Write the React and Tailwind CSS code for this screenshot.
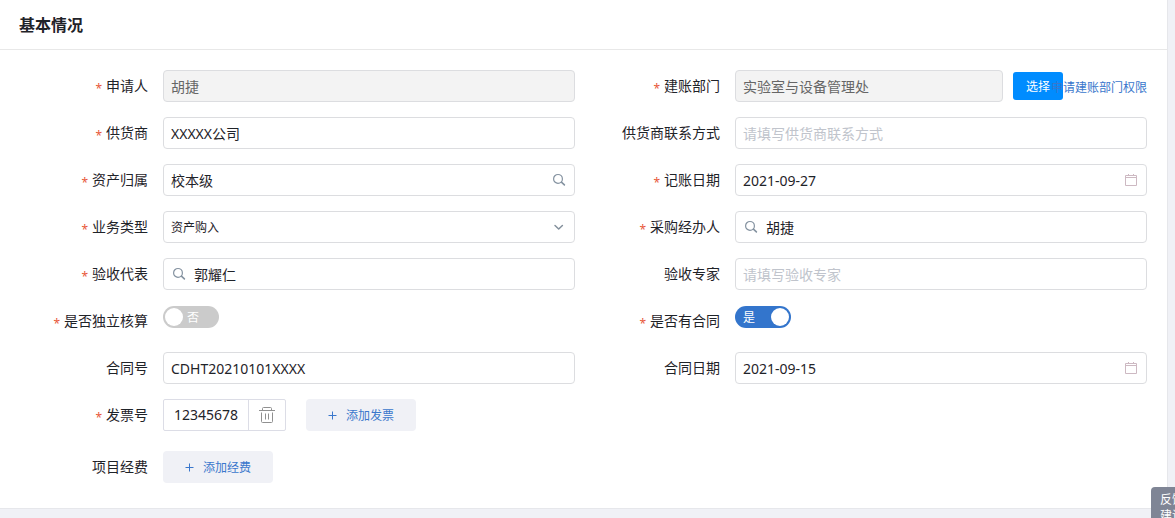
import React, { useState } from 'react';

/* ── Icons ─────────────────────────────────────────────────── */
const SearchIcon = ({ className = '' }) => (
  <svg className={`w-[14px] h-[14px] ${className}`} viewBox="0 0 14 14" fill="none" stroke="#8492a0" strokeWidth={1.2} strokeLinecap="round">
    <circle cx="6" cy="5.9" r="4.4" />
    <path d="M9.4 9.2l3 2.7" strokeWidth={1.6} />
  </svg>
);
const ChevronIcon = ({ className = '' }) => (
  <svg className={`w-[14px] h-[14px] ${className}`} viewBox="0 0 14 14" fill="none" stroke="#84909c" strokeWidth={1.5} strokeLinecap="round" strokeLinejoin="round">
    <path d="M3 5.5l3.7 3.5 3.7-3.5" />
  </svg>
);
const CalendarIcon = ({ className = '' }) => (
  <svg className={`w-[14px] h-[14px] ${className}`} viewBox="0 0 14 14" fill="none" stroke="#cdb9c2" strokeWidth={1}>
    <path d="M1.5 2.5h11v10h-11zM1.5 4.5h11M4.5 1v2M9.5 1v2" />
  </svg>
);
const TrashIcon = ({ className = '' }) => (
  <svg className={`w-4 h-4 ${className}`} viewBox="0 0 16 16" fill="none" stroke="#909090" strokeWidth={1}>
    <path d="M0 3.5h16M3.5 3.5v-2a1 1 0 0 1 1-1h7a1 1 0 0 1 1 1v2" />
    <path d="M2.5 5.5v9a1 1 0 0 0 1 1h9a1 1 0 0 0 1-1v-9M6.5 6.5v6M9.5 6.5v6" />
  </svg>
);
const PlusIcon = ({ className = '' }) => (
  <svg className={`w-[9px] h-[9px] ${className}`} viewBox="0 0 9 9" fill="none" stroke="#3a77cc" strokeWidth={1}>
    <path d="M4.5 0.5v8M0.5 4.5h8" />
  </svg>
);

const inputClass =
  'block w-full h-8 rounded border border-[#dcdde0] bg-white px-[7px] text-sm text-[#1f2329] outline-none placeholder:text-[#c0c4cc] placeholder:opacity-100 focus:border-[#3375cc] disabled:bg-[#f3f3f3] disabled:text-[#666]';

/* ── Form pieces ───────────────────────────────────────────── */
const Field = ({ id, label, required, className = '', children }) => (
  <div className={`flex ${className}`}>
    <label htmlFor={id} className="flex w-40 shrink-0 justify-end gap-1 pr-[15px] text-sm leading-8 text-[#1f2329] whitespace-nowrap">
      {required && <span className="h-8 pt-[3px] text-xs leading-8 text-[#e8583a]">*</span>}
      {label}
    </label>
    <div className="flex-1 min-w-0">{children}</div>
  </div>
);

const TextField = ({ id, label, required, value = '', placeholder, disabled, prefix, suffix }) => (
  <Field id={id} label={label} required={required}>
    <div className="relative">
      {prefix && <span className="absolute left-[9px] top-[9px]">{prefix}</span>}
      <input
        id={id}
        type="text"
        defaultValue={value}
        placeholder={placeholder}
        disabled={disabled}
        className={`${inputClass} ${prefix ? 'pl-[30px]' : ''} ${suffix ? 'pr-8' : ''}`}
      />
      {suffix && <span className="absolute right-[9px] top-[9px]">{suffix}</span>}
    </div>
  </Field>
);

const SwitchField = ({ id, label, initial }) => {
  const [on, setOn] = useState(initial);
  return (
    <Field id={id} label={label} required>
      <button
        id={id}
        type="button"
        role="switch"
        aria-checked={on}
        onClick={() => setOn(!on)}
        className={`mt-px flex h-[22px] w-14 items-center rounded-full px-[2px] text-xs text-white ${
          on ? 'flex-row-reverse justify-between bg-[#3375cc]' : 'gap-1 bg-[#cbcbcb]'
        }`}
      >
        <span className="h-[18px] w-[18px] shrink-0 rounded-full bg-white" />
        <span className={on ? 'pt-px pl-[6px]' : 'pt-px'}>{on ? '是' : '否'}</span>
      </button>
    </Field>
  );
};

const AddButton = ({ children }) => (
  <button type="button" className="flex h-8 w-[110px] items-center justify-center gap-[9px] rounded bg-[#f0f1f6] text-xs text-[#3a77cc]">
    <PlusIcon />
    <span className="pt-[2px]">{children}</span>
  </button>
);

export default function App() {
  return (
    <div className="min-h-screen bg-[#f0f1f6] pr-[7px] font-['Noto_Sans','Noto_Sans_CJK_SC',sans-serif]">
      <section className="border-r border-b border-[#e6e7eb] bg-white">
        <header className="flex h-[50px] items-center border-b border-[#e8e8e8] px-[19px]">
          <h2 className="text-base font-bold text-[#1f2329]">基本情况</h2>
        </header>

        <form className="grid grid-cols-2 gap-y-[15px] pt-5 pr-5 pb-[25px] pl-[3px]">
          <TextField id="applicant" label="申请人" required value="胡捷" disabled />
          <Field id="department" label="建账部门" required>
            <div className="flex items-center">
              <input id="department" type="text" defaultValue="实验室与设备管理处" disabled className={`${inputClass} flex-1 min-w-0`} />
              <button type="button" className="ml-[10px] h-7 w-[50px] shrink-0 rounded-[3px] bg-[#008cff] pt-[2px] text-xs text-white">选择</button>
              {/* the link runs over the end of the button */}
              <a href="#permission" className="relative -ml-3 shrink-0 pt-[3px] text-xs text-[#3a77cc]">申请建账部门权限</a>
            </div>
          </Field>

          <TextField id="supplier" label="供货商" required value="XXXXX公司" />
          <TextField id="supplierContact" label="供货商联系方式" placeholder="请填写供货商联系方式" />

          <TextField id="owner" label="资产归属" required value="校本级" suffix={<SearchIcon />} />
          <TextField id="bookDate" label="记账日期" required value="2021-09-27" suffix={<CalendarIcon />} />

          <Field id="bizType" label="业务类型" required>
            <div className="relative">
              <select
                id="bizType"
                className="block h-8 w-full appearance-none rounded border border-[#dcdde0] bg-white px-[7px] pt-[2px] text-xs text-[#1f2329] outline-none"
              >
                <option>资产购入</option>
              </select>
              <ChevronIcon className="pointer-events-none absolute right-[9px] top-[9px]" />
            </div>
          </Field>
          <TextField id="buyer" label="采购经办人" required value="胡捷" prefix={<SearchIcon />} />

          <TextField id="inspector" label="验收代表" required value="郭耀仁" prefix={<SearchIcon />} />
          <TextField id="expert" label="验收专家" placeholder="请填写验收专家" />

          <SwitchField id="independent" label="是否独立核算" initial={false} />
          <SwitchField id="hasContract" label="是否有合同" initial={true} />

          <TextField id="contractNo" label="合同号" value="CDHT20210101XXXX" />
          <TextField id="contractDate" label="合同日期" value="2021-09-15" suffix={<CalendarIcon />} />

          <Field id="invoice" label="发票号" required className="col-span-2 pb-[5px]">
            <div className="flex gap-5">
              <div className="flex h-8 rounded-[2px] border border-[#dcdde6]">
                <input id="invoice" type="text" defaultValue="12345678" className="w-[85px] border-r border-[#dcdde6] px-[10px] text-sm text-[#1f2329] outline-none" />
                <button type="button" aria-label="删除发票" className="flex w-9 items-center justify-center">
                  <TrashIcon />
                </button>
              </div>
              <AddButton>添加发票</AddButton>
            </div>
          </Field>

          <div className="col-span-2 flex">
            <span className="w-40 shrink-0 pr-[15px] text-right text-sm leading-8 text-[#1f2329]">项目经费</span>
            <AddButton>添加经费</AddButton>
          </div>
        </form>
      </section>

      {/* feedback tab, half tucked behind the window corner */}
      <button type="button" className="fixed -right-[18px] -bottom-[11px] w-[42px] rounded bg-[#7f8595] px-[9px] py-[5px] text-xs leading-4 text-white">
        反馈建议
      </button>
    </div>
  );
}
